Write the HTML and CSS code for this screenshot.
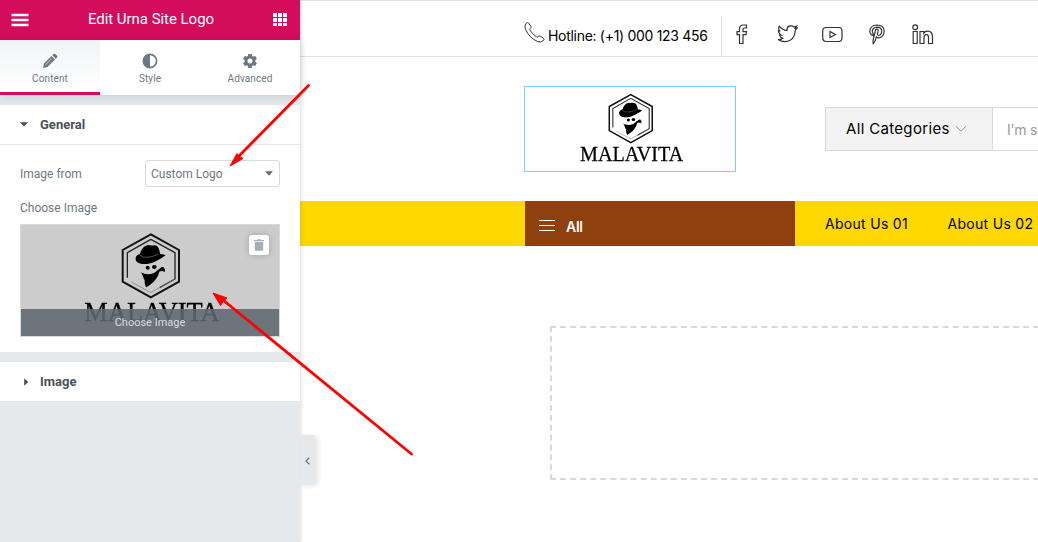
FILE: index.html
```html
<!DOCTYPE html>
<html lang="en">
<head>
<meta charset="utf-8">
<title>Edit Urna Site Logo</title>
<link rel="stylesheet" href="styles.css">
</head>
<body>
<svg class="defs" width="0" height="0">
  <symbol id="logo" viewBox="250 50 410 280">
    <path d="M453.500 60L538 107V202L453.500 249L369 202V107Z" fill="none" stroke="#111" stroke-width="6"/>
    <path d="M453.500 75L526 115V194L480 220M383 190V115L453.500 75" fill="none" stroke="#222" stroke-width="4"/>
    <path d="M526 194L453.500 235L395 203" fill="none" stroke="#777" stroke-width="2"/>
    <path d="M421 119C424 104 436 92 447 92C456 96 464 89 472 95C479 101 479 112 482 119C490 119 495 122 498 123C489 130 480 134 471 139C452 150 424 153 413 144C403 135 408 121 421 119Z" fill="#000"/>
    <path d="M421 121C424 133 458 130 477 119" fill="none" stroke="#777" stroke-width="2"/>
    <ellipse cx="444" cy="160" rx="6" ry="6"/><ellipse cx="464" cy="158" rx="7" ry="6"/>
    <path d="M423 174C440 183 461 182 474 167C481 164 482 157 491 158L496 165L495 173C488 169 484 170 479 172C475 190 460 208 439 219C436 211 434 204 435 197C429 191 431 181 423 174Z"/>
    <text x="254" y="320" class="logo-word" textLength="406" lengthAdjust="spacingAndGlyphs">MALAVITA</text>
  </symbol>
</svg>
<div class="app">
  <aside class="panel">
    <header class="panel-head">
      <svg width="18" height="14" viewBox="0 0 18 14"><path d="M.5 2h17M.5 7h17M.5 12h17" stroke="#fff" stroke-width="2.300"/></svg>
      <h1>Edit Urna Site Logo</h1>
      <svg width="14" height="14" viewBox="0 0 14 14" fill="#fff"><path d="M0 0h4v4H0zM5 0h4v4H5zM10 0h4v4h-4zM0 5h4v4H0zM5 5h4v4H5zM10 5h4v4h-4zM0 10h4v3H0zM5 10h4v3H5zM10 10h4v3h-4z"/></svg>
    </header>
    <nav class="tabs">
      <a class="tab active"><svg width="16" height="16" viewBox="0 0 16 16"><path fill="#6d7882" d="M1 15l1-4.500L9.500 3l3.500 3.500L5.500 14zM10.300 2.200L11.600.9q.8-.7 1.600 0l1.900 1.900q.8.800 0 1.600l-1.300 1.300z"/><path d="M3.700 11.800l6-6" stroke="#dfe2e5" stroke-width=".8"/></svg><span>Content</span></a>
      <a class="tab"><svg width="16" height="16" viewBox="0 0 16 16"><circle cx="8" cy="8" r="6.600" fill="none" stroke="#6d7882" stroke-width="1.700"/><path d="M8 1a7 7 0 0 0 0 14z" fill="#6d7882"/></svg><span>Style</span></a>
      <a class="tab"><svg width="16" height="16" viewBox="0 0 16 16"><path fill="#6d7882" fill-rule="evenodd" d="M6.300 1h3.400l.4 2 1.100.6 2-.7 1.700 2.900-1.600 1.400v1.500l1.600 1.400-1.700 2.900-2-.7-1.100.6-.4 2.100H6.300l-.4-2.100-1.100-.6-2 .7-1.700-2.900 1.600-1.400V7.200L1.100 5.800l1.700-2.900 2 .7L5.900 3zM8 5.500a2.500 2.500 0 1 0 0 5 2.500 2.500 0 0 0 0-5z"/></svg><span>Advanced</span></a>
    </nav>
    <section class="section">
      <h2 class="section-title"><svg width="8" height="5" viewBox="0 0 8 5"><path d="M0 .3h8L4 4.500z" fill="#495157"/></svg>General</h2>
      <div class="controls">
        <div class="row">
          <label>Image from</label>
          <div class="select"><span>Custom Logo</span><svg width="8" height="5" viewBox="0 0 8 5"><path d="M0 .3h8L4 4.800z" fill="#5f6b76"/></svg></div>
        </div>
        <label class="media-label">Choose Image</label>
        <div class="media">
          <svg class="media-logo"><use href="#logo"/></svg>
          <button class="trash"><svg width="10" height="12" viewBox="0 0 10 12"><path d="M0 1h3l.6-.8h2.800L7 1h3v1.200H0zM.8 3h8.400v8q0 .8-.8.800H1.600q-.8 0-.8-.8z" fill="#a4afb7"/></svg></button>
          <div class="choose">Choose Image</div>
        </div>
      </div>
    </section>
    <section class="section">
      <h2 class="section-title closed"><svg width="8" height="8" viewBox="0 0 8 8"><path d="M4.200.3v7.400L8.300 4z" fill="#495157"/></svg>Image</h2>
    </section>
    <button class="collapse"><svg width="5" height="8" viewBox="0 0 5 8"><path d="M4.300.8L1 4l3.300 3.200" fill="none" stroke="#6d7882" stroke-width="1.300"/></svg></button>
  </aside>
  <main class="site">
    <div class="topbar">
      <div class="hotline">
        <svg width="21" height="21" viewBox="0 0 21 21"><path d="M2.300 1.300Q3.600.1 4.800 1.300L6.900 4.400Q7.500 5.500 6.200 6.500Q5.400 7.200 5.900 8.100Q8.300 12 12.500 14.900Q13.500 15.500 14.200 14.500Q15 13.500 16.200 14.100L19.400 16.200Q20.800 17.200 19.500 18.500Q17 21 13.600 19.500Q5.300 16 1.500 7.200Q-.1 3.500 2.300 1.300Z"/></svg>
        <span>Hotline: (+1) 000 123 456</span>
      </div>
      <div class="social">
        <svg width="12" height="21" viewBox="0 0 12 21"><path d="M3.500 19.500v-8.800H1V7.600h2.500V5q0-4 4-4h3v3H8.200Q7 4 7 5.200v2.400h3.500L10 10.700H7v8.800z"/></svg>
        <svg width="21" height="21" viewBox="0 0 21 21"><path d="M1 15.500Q4 16 5.800 14.300Q3.200 13.600 2.600 11.200H4.200Q1.500 9.700 1.500 6.800L3 7.200Q.7 5 2.200 2.200Q5.700 6.300 10 6.500Q9.600 2.700 13 1.900Q15.200 1.400 17 3L19.700 2L18.300 4.300L20.200 4L18.300 6Q18.200 13 13.500 16Q7.500 19.500 1 15.500Z"/></svg>
        <svg width="21" height="21" viewBox="0 0 21 21"><rect x=".7" y="3.500" width="19.300" height="14" rx="3.500"/><path d="M8 7.500v6l5.500-3z"/></svg>
        <svg width="16" height="21" viewBox="0 0 16 21"><path d="M4.300 11.800Q.8 10.500.8 7Q1 1.500 8 1Q15 1.300 15.200 7Q14.800 13.500 9.800 13.800Q8.200 13.800 7.300 12.800Q6.500 17.500 4.200 19.700Q3.400 16.500 6.200 8.300Q5.900 5.300 8 5.200Q10 5.500 8.500 9.500Q8.300 11.500 9.800 11.500Q12.700 10.700 12.700 7Q12.500 3.400 8.200 3.200Q3.500 3.500 3.300 7.500Q3.400 8.500 4.300 9.700Z"/></svg>
        <svg width="22" height="21" viewBox="0 0 22 21"><circle cx="3.200" cy="3.300" r="2.400"/><path d="M1.200 7.500h4v12h-4zM8 7.500h3.800v1.600Q13 7.200 15.700 7.200Q20.500 7.200 20.500 13v6.500h-4V13.500Q16.500 10.700 14.500 10.700Q12 10.700 12 13.500v6H8z"/></svg>
      </div>
    </div>
    <div class="header">
      <div class="brand"><svg class="brand-logo"><use href="#logo"/></svg></div>
      <div class="search">
        <div class="cats"><span>All Categories</span><svg width="12" height="8" viewBox="0 0 12 8"><path d="M1 1.200l5 5 5-5" fill="none" stroke="#8d9499"/></svg></div>
        <div class="query">I'm s</div>
      </div>
    </div>
    <div class="menu">
      <div class="all"><svg width="16" height="12" viewBox="0 0 16 12"><path d="M0 .5h16M0 5.500h16M0 10.500h16" stroke="#fff"/></svg><span>All</span></div>
      <a>About Us 01</a><a>About Us 02</a>
    </div>
    <div class="dropzone"></div>
  </main>
</div>
<svg class="arrows" width="1038" height="542" viewBox="0 0 1038 542">
  <path d="M308.500 85.500L238 157M411.500 454L223 300" stroke="#f00" stroke-width="2.800" stroke-linecap="round"/>
  <path d="M230 166L237 153.500L238.500 156L243 158.500ZM213 293L227 298L224 300.500L220.500 305.500Z" fill="#f00" stroke="#f00"/>
</svg>
</body>
</html>
```
FILE: styles.css
```css
* { box-sizing: border-box; }
body { margin: 0; width: 1038px; height: 542px; overflow: hidden; background: #fff; font-family: Roboto, sans-serif; position: relative; }
svg { display: block; flex: none; }
.defs, .arrows { position: absolute; top: 0; left: 0; }
.arrows { z-index: 5; pointer-events: none; }
h1, h2 { margin: 0; }
button { border: 0; padding: 0; display: flex; align-items: center; justify-content: center; }
.logo-word { font: 84px "Liberation Serif", serif; fill: #000; stroke: #000; stroke-width: 1px; }
.app { display: flex; height: 542px; }

.panel { position: relative; z-index: 2; width: 300px; flex: none; background: #e6e9ec; box-shadow: 0 0 5px rgba(0,0,0,.2); }
.panel-head { height: 40px; background: #d30c5c; display: flex; align-items: center; justify-content: space-between; padding: 0 13px 0 11px; }
.panel-head h1 { color: #fff; font-size: 15px; font-weight: 400; line-height: 38px; padding-bottom: 2px; letter-spacing: -.04px; }
.tabs { display: flex; height: 55px; background: #fff; box-shadow: 0 2px 10px rgba(0,0,0,.12); margin-bottom: 10px; }
.tab { flex: 1; display: flex; flex-direction: column; align-items: center; padding-top: 13px; border-bottom: 3px solid transparent; color: #6d7882; font-size: 10px; line-height: 12px; gap: 4px; letter-spacing: .1px; }
.tab.active { background: linear-gradient(#f1f3f5, #fff) padding-box; border-color: #d30c5c; }
.section { background: #fff; margin-bottom: 10px; }
.section-title { height: 40px; display: flex; align-items: center; gap: 12px; padding-left: 20px; font-size: 13px; font-weight: 700; color: #495157; border-bottom: 1px solid #e6e9ec; }
.section-title.closed { height: 39px; border: 0; }
.section-title svg { overflow: visible; }
.controls { padding: 15px 20px; height: 207px; color: #6d7882; font-size: 12px; }
.row { display: flex; justify-content: space-between; align-items: center; height: 27px; }
.select { width: 135px; height: 27px; border: 1px solid #d5dadf; border-radius: 3px; padding: 0 6px 0 5px; display: flex; align-items: center; justify-content: space-between; }
.media-label { display: block; line-height: 14px; margin-top: 14px; }
.media { position: relative; height: 113px; margin-top: 9px; border: 1px solid #d5dadf; background: #ccc; overflow: hidden; }
.media-logo { width: 136.700px; height: 93.300px; margin: 5.700px 0 0 62.300px; filter: blur(.5px); }
.trash { position: absolute; top: 10px; right: 10px; width: 20px; height: 20px; background: #fff; border-radius: 3px; box-shadow: 0 0 6px rgba(0,0,0,.2); }
.choose { position: absolute; left: 0; right: 0; bottom: 0; height: 27px; line-height: 28px; background: rgba(96,104,112,.88); color: #d9dbdd; font-size: 11px; text-align: center; }
.collapse { position: absolute; left: 300px; top: 435px; width: 15px; height: 50px; padding-top: 2px; background: #e6e9ec; box-shadow: 3px 1px 5px rgba(0,0,0,.1); }

.site { flex: 1; min-width: 0; font-family: Inter, sans-serif; color: #000; overflow: hidden; }
.topbar { height: 57px; border: solid #e2e2e2; border-width: 1px 0; display: flex; padding-left: 224px; }
.hotline { display: flex; width: 198px; height: 40px; margin-top: 15px; border-right: 1px solid #e2e2e2; font-size: 14px; line-height: 40px; gap: 3px; white-space: nowrap; letter-spacing: -.3px; }
.hotline svg { margin-top: 6px; fill: none; stroke: #333; }
.social { display: flex; margin: 23px 0 0 14px; }
.social svg { fill: none; stroke: #333; stroke-width: 1.200; }
.social svg:nth-child(2) { margin-left: 29px; }
.social svg:nth-child(3) { margin-left: 24px; }
.social svg:nth-child(4) { margin-left: 26px; }
.social svg:nth-child(5) { margin-left: 27px; }
.header { height: 144px; display: flex; align-items: flex-start; padding-left: 224px; }
.brand { width: 212px; height: 86px; margin-top: 29px; border: 1px solid #71d7f7; flex: none; }
.brand-logo { width: 104.300px; height: 71.200px; margin: 5.200px 0 0 54px; filter: blur(.3px); }
.search { display: flex; flex: none; width: 420px; height: 44px; margin: 50px 0 0 89px; border: 1px solid #d9d9d9; }
.cats { width: 167px; background: #f3f3f3; border-right: 1px solid #d9d9d9; display: flex; align-items: center; padding-left: 20px; gap: 5px; font-size: 15px; letter-spacing: .33px; white-space: nowrap; }
.cats span { padding-bottom: 1px; }
.query { padding-left: 14px; line-height: 44px; font-size: 14px; letter-spacing: -.3px; color: #999; }
.menu { display: flex; height: 45px; background: #ffd800; padding-left: 225px; font-size: 14px; white-space: nowrap; }
.all { width: 270px; flex: none; background: #8e400f; color: #fff; display: flex; align-items: center; gap: 11px; padding: 5px 0 0 14px; font-weight: 600; letter-spacing: -.3px; }
.menu a { margin-left: 30px; line-height: 45px; letter-spacing: .3px; }
.menu a + a { margin-left: 39.500px; }
.dropzone { width: 600px; height: 154px; margin: 80px 0 0 250px; border: 2px dashed #d5dadf; }
```
